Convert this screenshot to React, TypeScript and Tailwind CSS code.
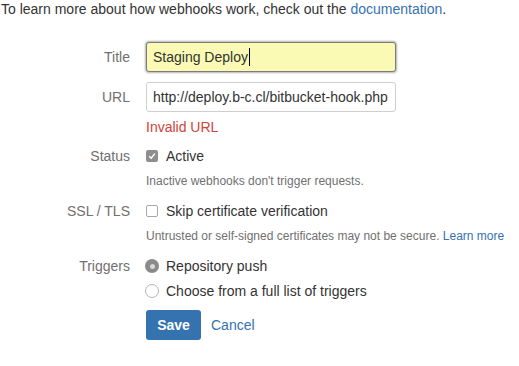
import React from "react";

const labelCls = "w-[130px] shrink-0 text-right text-[#707070]";

const Checkbox = ({ checked }: { checked: boolean }) =>
  checked ? (
    <span className="flex h-[12px] w-[12px] items-center justify-center rounded-[2px] bg-[#8e8e8e]">
      <svg width="8" height="8" viewBox="0 0 8 8">
        <path d="M1.2 4.3 L3.2 6.2 L6.8 1.6" fill="none" stroke="#fff" strokeWidth="1.5" />
      </svg>
    </span>
  ) : (
    <span className="block h-[12px] w-[12px] rounded-[2px] border border-[#a8a8a8] bg-white" />
  );

const Radio = ({ checked }: { checked: boolean }) =>
  checked ? (
    <span className="flex h-[14px] w-[14px] items-center justify-center rounded-full bg-[#8a8a8a]">
      <span className="block h-[5px] w-[5px] rounded-full bg-[#d8d8d8]" />
    </span>
  ) : (
    <span className="block h-[14px] w-[14px] rounded-full border border-[#b5b5b5] bg-white" />
  );

const App = () => {
  return (
    <div className="h-[366px] w-[519px] overflow-hidden bg-white font-['Liberation_Sans',Arial,sans-serif] text-[14px] text-[#333]">
      <p className="pl-[1px] leading-[18px]">
        To learn more about how webhooks work, check out the{" "}
        <a className="text-[#3572b0]">documentation</a>.
      </p>

      <form className="mt-[24px]">
        {/* Title */}
        <div className="flex gap-4">
          <label className={`${labelCls} leading-[30px]`}>Title</label>
          <div className="flex h-[30px] w-[250px] items-center rounded-[3px] border border-[#7a7a7a] bg-[#fafab4] px-[6px] shadow-[0_0_2px_1px_rgba(0,0,0,0.3)]">
            <span>Staging Deploy</span>
            <span className="ml-[1px] block h-[18px] w-px bg-black" />
          </div>
        </div>

        {/* URL */}
        <div className="mt-[10px] flex gap-4">
          <label className={`${labelCls} leading-[30px]`}>URL</label>
          <div>
            <div className="flex h-[30px] w-[250px] items-center rounded-[3px] border border-[#cfcfcf] bg-white px-[6px]">
              http://deploy.b-c.cl/bitbucket-hook.php
            </div>
            <div className="mt-[5px] leading-[20px] text-[#d04437]">Invalid URL</div>
          </div>
        </div>

        {/* Status */}
        <div className="mt-[9px] flex gap-4">
          <label className={`${labelCls} leading-[20px]`}>Status</label>
          <div>
            <div className="flex items-center gap-[8px] leading-[20px]">
              <Checkbox checked />
              <span>Active</span>
            </div>
            <div className="mt-[6px] text-[12px] leading-[18px] text-[#707070]">
              Inactive webhooks don't trigger requests.
            </div>
          </div>
        </div>

        {/* SSL */}
        <div className="mt-[11px] flex gap-4">
          <label className={`${labelCls} leading-[20px]`}>SSL / TLS</label>
          <div>
            <div className="flex items-center gap-[8px] leading-[20px]">
              <Checkbox checked={false} />
              <span>Skip certificate verification</span>
            </div>
            <div className="mt-[6px] whitespace-nowrap text-[12px] leading-[18px] text-[#707070]">
              Untrusted or self-signed certificates may not be secure.{" "}
              <a className="text-[#3572b0]">Learn more</a>
            </div>
          </div>
        </div>

        {/* Triggers */}
        <div className="mt-[11px] flex gap-4">
          <label className={`${labelCls} leading-[20px]`}>Triggers</label>
          <div>
            <div className="-ml-px flex items-center gap-[7px] leading-[20px]">
              <Radio checked />
              <span>Repository push</span>
            </div>
            <div className="-ml-px mt-[5px] flex items-center gap-[7px] leading-[20px]">
              <Radio checked={false} />
              <span>Choose from a full list of triggers</span>
            </div>
            <div className="mt-[9px] flex items-center gap-[10px]">
              <button
                type="button"
                className="h-[30px] w-[55px] rounded-[3px] bg-[#3572b0] font-bold text-white"
              >
                Save
              </button>
              <a className="text-[#3572b0]">Cancel</a>
            </div>
          </div>
        </div>
      </form>
    </div>
  );
};

export default App;
